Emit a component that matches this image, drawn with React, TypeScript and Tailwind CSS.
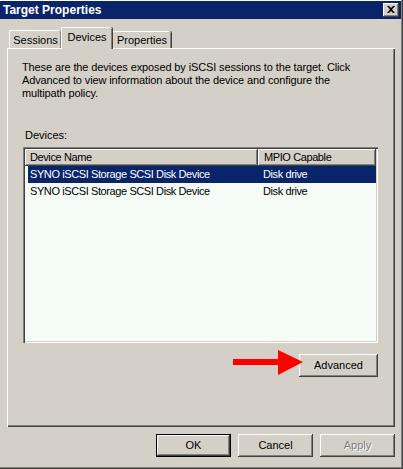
import React from "react";

const raised =
  "shadow-[inset_-1px_-1px_#404040,inset_1px_1px_#ffffff,inset_-2px_-2px_#808080]";
const font = { fontFamily: '"Liberation Sans", Arial, sans-serif' };

function Button({
  label,
  width,
  isDefault,
  disabled,
}: {
  label: string;
  width: string;
  isDefault?: boolean;
  disabled?: boolean;
}) {
  if (isDefault) {
    return (
      <div className={`${width} h-[23px] border border-black bg-[#d4d0c8]`}>
        <div
          className={`flex h-full items-center justify-center text-[11px] text-black ${raised}`}
        >
          {label}
        </div>
      </div>
    );
  }
  return (
    <div
      className={`${width} flex h-[23px] items-center justify-center bg-[#d4d0c8] text-[11px] ${raised} ${
        disabled ? "text-[#808080] [text-shadow:1px_1px_0_#ffffff]" : "text-black"
      }`}
    >
      {label}
    </div>
  );
}

function Tab({ label, active, className }: { label: string; active?: boolean; className: string }) {
  return (
    <div
      className={`${className} flex items-center justify-center rounded-t-[2px] border-l border-t border-white bg-[#d4d0c8] text-[11px] text-black shadow-[inset_-1px_0_#808080,1px_0_#404040] ${
        active ? "relative z-10 -mb-px h-[22px] pb-[2px]" : "pt-px"
      }`}
    >
      {label}
    </div>
  );
}

const devices = [
  { name: "SYNO iSCSI Storage SCSI Disk Device", mpio: "Disk drive", selected: true },
  { name: "SYNO iSCSI Storage SCSI Disk Device", mpio: "Disk drive", selected: false },
];

export default function App() {
  return (
    <div
      className="relative flex h-[469px] w-[403px] flex-col overflow-hidden bg-[#d4d0c8] shadow-[inset_-1px_-1px_#404040,inset_-2px_-2px_#808080,inset_0_1px_#ffffff]"
      style={font}
    >
      {/* title bar */}
      <div className="mr-[2px] mt-px flex h-[18px] items-center justify-between bg-[#0a246a] pl-[3px] pr-[2px]">
        <span className="text-[12px] font-bold text-white">Target Properties</span>
        <div className={`flex h-[14px] w-[16px] items-center justify-center bg-[#d4d0c8] ${raised}`}>
          <svg width="8" height="7" viewBox="0 0 8 7" className="-mt-px -ml-px">
            <path d="M0 0h2l2 2 2-2h2L5 3.5 8 7H6L4 5 2 7H0l3-3.5z" fill="#000" />
          </svg>
        </div>
      </div>

      {/* tabs */}
      <div className="ml-[9px] mt-[8px] flex h-[21px] items-end">
        <Tab label="Sessions" className="h-[18px] w-[52px]" />
        <Tab label="Devices" active className="w-[51px]" />
        <Tab label="Properties" className="h-[17px] w-[59px]" />
      </div>

      {/* tab panel */}
      <div className="ml-[7px] flex h-[379px] w-[388px] flex-col border-l border-t border-white pl-[15px] pt-[12px] shadow-[inset_-1px_-1px_#404040,inset_-2px_-2px_#808080]">
        <p className="-ml-px w-[350px] text-[11px] leading-[13px] tracking-[-0.12px] text-black">
          These are the devices exposed by iSCSI sessions to the target. Click Advanced to view
          information about the device and configure the multipath policy.
        </p>
        <div className="ml-[2px] mt-[29px] text-[11px] leading-[13px] text-black">Devices:</div>

        {/* list view */}
        <div className="mt-[5px] flex h-[196px] w-[355px] flex-col bg-[#f5fbf7] p-[2px] tracking-[-0.4px] shadow-[inset_1px_1px_#808080,inset_2px_2px_#404040,inset_-1px_-1px_#ffffff,inset_-2px_-2px_#d4d0c8]">
          <div className="flex h-[17px] text-[11px] text-black">
            <div className={`flex w-[233px] items-center bg-[#d4d0c8] pl-[5px] ${raised}`}>Device Name</div>
            <div className={`flex w-[118px] items-center bg-[#d4d0c8] pl-[6px] ${raised}`}>MPIO Capable</div>
          </div>
          {devices.map((d, i) => (
            <div
              key={i}
              className={`ml-[3px] flex h-[17px] w-[348px] items-center text-[11px] ${
                d.selected ? "bg-[#0a246a] text-white" : "text-black"
              }`}
            >
              <span className="w-[233px] pl-[2px]">{d.name}</span>
              <span className="pl-[2px]">{d.mpio}</span>
            </div>
          ))}
        </div>

        <div className="mt-[11px] flex w-[355px] justify-end">
          <Button label="Advanced" width="w-[79px]" />
        </div>
      </div>

      {/* dialog buttons */}
      <div className="mr-[8px] mt-[7px] flex justify-end gap-[7px]">
        <Button label="OK" width="w-[75px]" isDefault />
        <Button label="Cancel" width="w-[75px]" />
        <Button label="Apply" width="w-[75px]" disabled />
      </div>

      {/* red arrow pointing at Advanced */}
      <svg className="absolute left-[233px] top-[349px]" width="72" height="27" viewBox="0 0 72 27">
        <rect x="0" y="10" width="47" height="6" fill="#ff0000" />
        <polygon points="45,1 70,13 45,26" fill="#ff0000" />
      </svg>
    </div>
  );
}
